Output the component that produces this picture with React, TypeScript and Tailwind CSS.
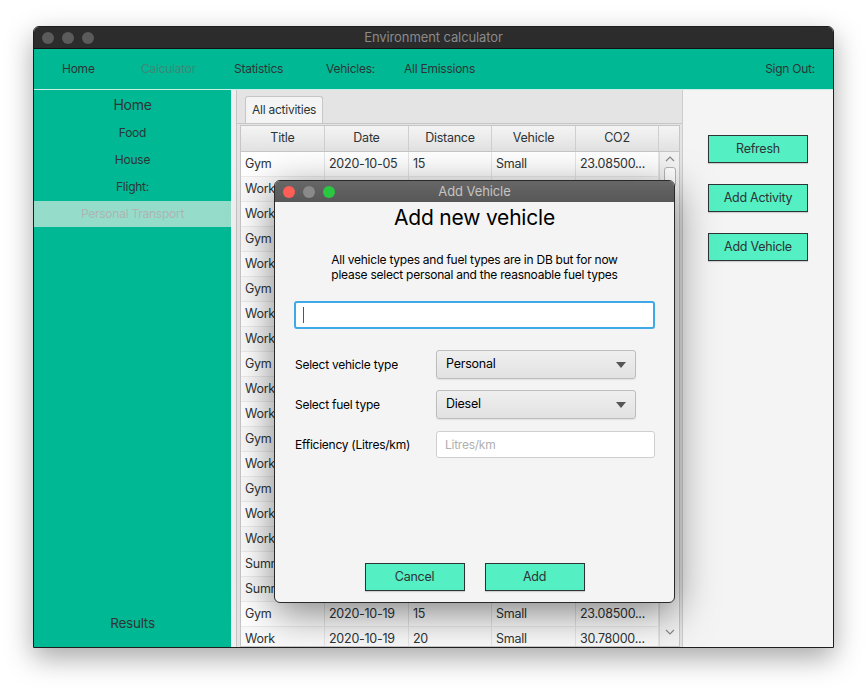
import { ReactNode } from "react";

const rows: [string, string, string, string, string][] = [
  ["Gym", "2020-10-05", "15", "Small", "23.08500..."],
  ["Work", "2020-10-05", "20", "Small", "30.78000..."],
  ["Work", "2020-10-06", "20", "Small", "30.78000..."],
  ["Gym", "2020-10-07", "15", "Small", "23.08500..."],
  ["Work", "2020-10-07", "20", "Small", "30.78000..."],
  ["Gym", "2020-10-08", "15", "Small", "23.08500..."],
  ["Work", "2020-10-08", "20", "Small", "30.78000..."],
  ["Work", "2020-10-09", "20", "Small", "30.78000..."],
  ["Gym", "2020-10-10", "15", "Small", "23.08500..."],
  ["Work", "2020-10-12", "20", "Small", "30.78000..."],
  ["Work", "2020-10-13", "20", "Small", "30.78000..."],
  ["Gym", "2020-10-14", "15", "Small", "23.08500..."],
  ["Work", "2020-10-14", "20", "Small", "30.78000..."],
  ["Gym", "2020-10-15", "15", "Small", "23.08500..."],
  ["Work", "2020-10-15", "20", "Small", "30.78000..."],
  ["Work", "2020-10-16", "20", "Small", "30.78000..."],
  ["Summer", "2020-10-17", "120", "Small", "184.6800..."],
  ["Summer", "2020-10-18", "120", "Small", "184.6800..."],
  ["Gym", "2020-10-19", "15", "Small", "23.08500..."],
  ["Work", "2020-10-19", "20", "Small", "30.78000..."],
];

const colWidths = ["w-[84px]", "w-[84px]", "w-[83px]", "w-[84px]", "w-[83px]"];

export default function App() {
  return (
    <div className="min-h-[690px] bg-white pl-[33px] pt-[26px] font-['Inter',sans-serif] text-[12px] tracking-[-0.25px] text-[#2d3436]">
      <div className="relative flex h-[622px] w-[801px] flex-col overflow-hidden rounded-t-[6px] border border-[#1e1e1e] shadow-[0_10px_28px_rgba(0,0,0,0.35)]">
        <TitleBar />
        <NavBar />
        <div className="flex min-h-0 flex-1 border-t border-[#c9eee4]">
          <Sidebar />
          <div className="w-[6px] border-r border-[#c4c4c4] bg-[#efefef]" />
          <TablePane />
          <RightPanel />
        </div>
        <AddVehicleDialog />
      </div>
    </div>
  );
}

function TitleBar() {
  return (
    <div className="relative flex h-[21px] items-center bg-[#2c2c2c] pl-[8px]">
      <div className="flex gap-[8px]">
        <span className="h-[12px] w-[12px] rounded-full bg-[#5b5b5b]" />
        <span className="h-[12px] w-[12px] rounded-full bg-[#5b5b5b]" />
        <span className="h-[12px] w-[12px] rounded-full bg-[#5b5b5b]" />
      </div>
      <p className="absolute inset-x-0 text-center text-[13px] tracking-[-0.1px] text-[#8a8a8a]">Environment calculator</p>
    </div>
  );
}

function NavBar() {
  return (
    <div className="flex h-[41px] items-center border-t border-[#111] bg-[#00b894] pl-[28px] pr-[18px]">
      <span className="w-[79px]">Home</span>
      <span className="w-[93px] text-[#3c8a76]">Calculator</span>
      <span className="w-[92px]">Statistics</span>
      <span className="w-[78px]">Vehicles:</span>
      <span>All Emissions</span>
      <span className="ml-auto">Sign Out:</span>
    </div>
  );
}

function Sidebar() {
  return (
    <div className="flex w-[197px] flex-col bg-[#00b894]">
      <p className="mt-[5px] h-[20px] text-center text-[14px] leading-[20px]">Home</p>
      <p className="mt-[8px] h-[20px] text-center leading-[20px]">Food</p>
      <p className="mt-[7px] h-[20px] text-center leading-[20px]">House</p>
      <p className="mt-[7px] h-[20px] text-center leading-[20px]">Flight:</p>
      <p className="mt-[4px] h-[26px] bg-[#96dccb] text-center leading-[26px] text-[#aeb4b2]">Personal Transport</p>
      <p className="mb-[14px] mt-auto text-center text-[13.5px]">Results</p>
    </div>
  );
}

function TablePane() {
  return (
    <div className="flex w-[445px] flex-col bg-[#e4e4e4]">
      <div className="flex h-[34px] shrink-0 items-end border-b border-[#c6c6c6] pl-[8px]">
        <div className="flex h-[27px] items-center rounded-t-[3px] border border-b-0 border-[#c6c6c6] bg-[#f4f4f4] px-[6px]">
          All activities
        </div>
      </div>
      <div className="ml-[3px] mr-[2px] mt-[1px] flex min-h-0 flex-1 overflow-hidden border border-[#c6c6c6] bg-white">
        <div className="flex flex-col">
          <div className="flex h-[26px] shrink-0 border-b border-[#c6c6c6] bg-gradient-to-b from-[#f4f4f4] to-[#e2e2e2] text-[12.5px]">
            {["Title", "Date", "Distance", "Vehicle", "CO2"].map((h, i) => (
              <div key={h} className={`${colWidths[i]} flex items-center justify-center border-r border-[#cfcfcf]`}>
                {h}
              </div>
            ))}
          </div>
          {rows.map((r, ri) => (
            <div key={ri} className={`flex h-[25px] shrink-0 border-b border-[#ececec] text-[12.5px] ${ri % 2 ? "bg-[#fafafa]" : "bg-white"}`}>
              {r.map((c, ci) => (
                <div key={ci} className={`${colWidths[ci]} flex items-center overflow-hidden whitespace-nowrap border-r border-[#e6e6e6] px-[4px]`}>
                  {c}
                </div>
              ))}
            </div>
          ))}
        </div>
        <Scrollbar />
      </div>
    </div>
  );
}

function Scrollbar() {
  return (
    <div className="flex flex-1 flex-col items-center">
      <div className="h-[26px] w-full shrink-0 border-b border-[#c6c6c6] bg-gradient-to-b from-[#f4f4f4] to-[#e2e2e2]" />
      <div className="flex w-full flex-1 flex-col items-center border-l border-[#dcdcdc] bg-[#f3f3f3]">
        <svg width="10" height="6" viewBox="0 0 10 6" className="mt-[4px]">
          <path d="M1 5 L5 1 L9 5" stroke="#8a8a8a" strokeWidth="1.2" fill="none" />
        </svg>
        <div className="mt-[5px] h-[20px] w-[12px] rounded-[3px] border border-[#b5b5b5] bg-white" />
        <svg width="10" height="6" viewBox="0 0 10 6" className="mb-[11px] mt-auto">
          <path d="M1 1 L5 5 L9 1" stroke="#8a8a8a" strokeWidth="1.2" fill="none" />
        </svg>
      </div>
    </div>
  );
}

function GreenButton({ children }: { children: ReactNode }) {
  return (
    <button className="h-[28px] w-[100px] border border-[#2d3436] bg-[#55efc4] text-[12.5px] tracking-[-0.25px] text-[#2d3436] shadow-[0_1px_1px_rgba(0,0,0,0.15)]">
      {children}
    </button>
  );
}

function RightPanel() {
  return (
    <div className="flex flex-1 flex-col gap-[21px] border-l border-[#cdcdcd] bg-[#f4f4f4] pl-[25px] pt-[45px]">
      <GreenButton>Refresh</GreenButton>
      <GreenButton>Add Activity</GreenButton>
      <GreenButton>Add Vehicle</GreenButton>
    </div>
  );
}

function SelectBox({ value }: { value: string }) {
  return (
    <div className="flex h-[29px] w-[200px] items-center justify-between rounded-[3px] border border-[#bdbdbd] bg-gradient-to-b from-[#efefef] to-[#e2e2e2] pl-[9px] pr-[9px] text-[12.5px] shadow-[0_1px_1px_rgba(0,0,0,0.08)]">
      <span>{value}</span>
      <svg width="10" height="6" viewBox="0 0 10 6">
        <path d="M0 0 L10 0 L5 6 Z" fill="#555" />
      </svg>
    </div>
  );
}

function AddVehicleDialog() {
  return (
    <div className="absolute left-[240px] top-[153px] flex h-[423px] w-[401px] flex-col overflow-hidden rounded-[6px] border border-[#2a2a2a] bg-[#f4f4f4] shadow-[0_10px_40px_rgba(0,0,0,0.5)]">
      <div className="relative flex h-[21px] shrink-0 items-center bg-gradient-to-b from-[#676767] to-[#575757] pl-[8px]">
        <div className="flex gap-[8px]">
          <span className="h-[12px] w-[12px] rounded-full bg-[#fd5f57]" />
          <span className="h-[12px] w-[12px] rounded-full bg-[#8a8a8a]" />
          <span className="h-[12px] w-[12px] rounded-full bg-[#2ac840]" />
        </div>
        <p className="absolute inset-x-0 text-center text-[13px] tracking-[-0.1px] text-[#c4c4c4]">Add Vehicle</p>
      </div>
      <p className="mt-[2px] text-center text-[21px] leading-[28px] tracking-[-0.2px] text-black">Add new vehicle</p>
      <div className="mt-[20px] text-center leading-[15px] text-black">
        <p>All vehicle types and fuel types are in DB but for now</p>
        <p>please select personal and the reasnoable fuel types</p>
      </div>
      <div className="mx-[19px] mt-[19px] flex h-[28px] items-center rounded-[3px] border-2 border-[#3fa9e8] bg-white pl-[7px]">
        <span className="h-[16px] w-[1px] bg-[#555]" />
      </div>
      <div className="ml-[20px] mt-[21px] flex items-center text-black">
        <span className="w-[141px]">Select vehicle type</span>
        <SelectBox value="Personal" />
      </div>
      <div className="ml-[20px] mt-[11px] flex items-center text-black">
        <span className="w-[141px]">Select fuel type</span>
        <SelectBox value="Diesel" />
      </div>
      <div className="ml-[20px] mt-[12px] flex items-center text-black">
        <span className="w-[141px]">Efficiency (Litres/km)</span>
        <div className="flex h-[27px] w-[219px] items-center rounded-[3px] border border-[#cfcfcf] bg-white pl-[8px] text-[#b0b0b0]">
          Litres/km
        </div>
      </div>
      <div className="mb-[11px] mt-auto flex justify-center gap-[20px]">
        <GreenButton>Cancel</GreenButton>
        <GreenButton>Add</GreenButton>
      </div>
    </div>
  );
}
